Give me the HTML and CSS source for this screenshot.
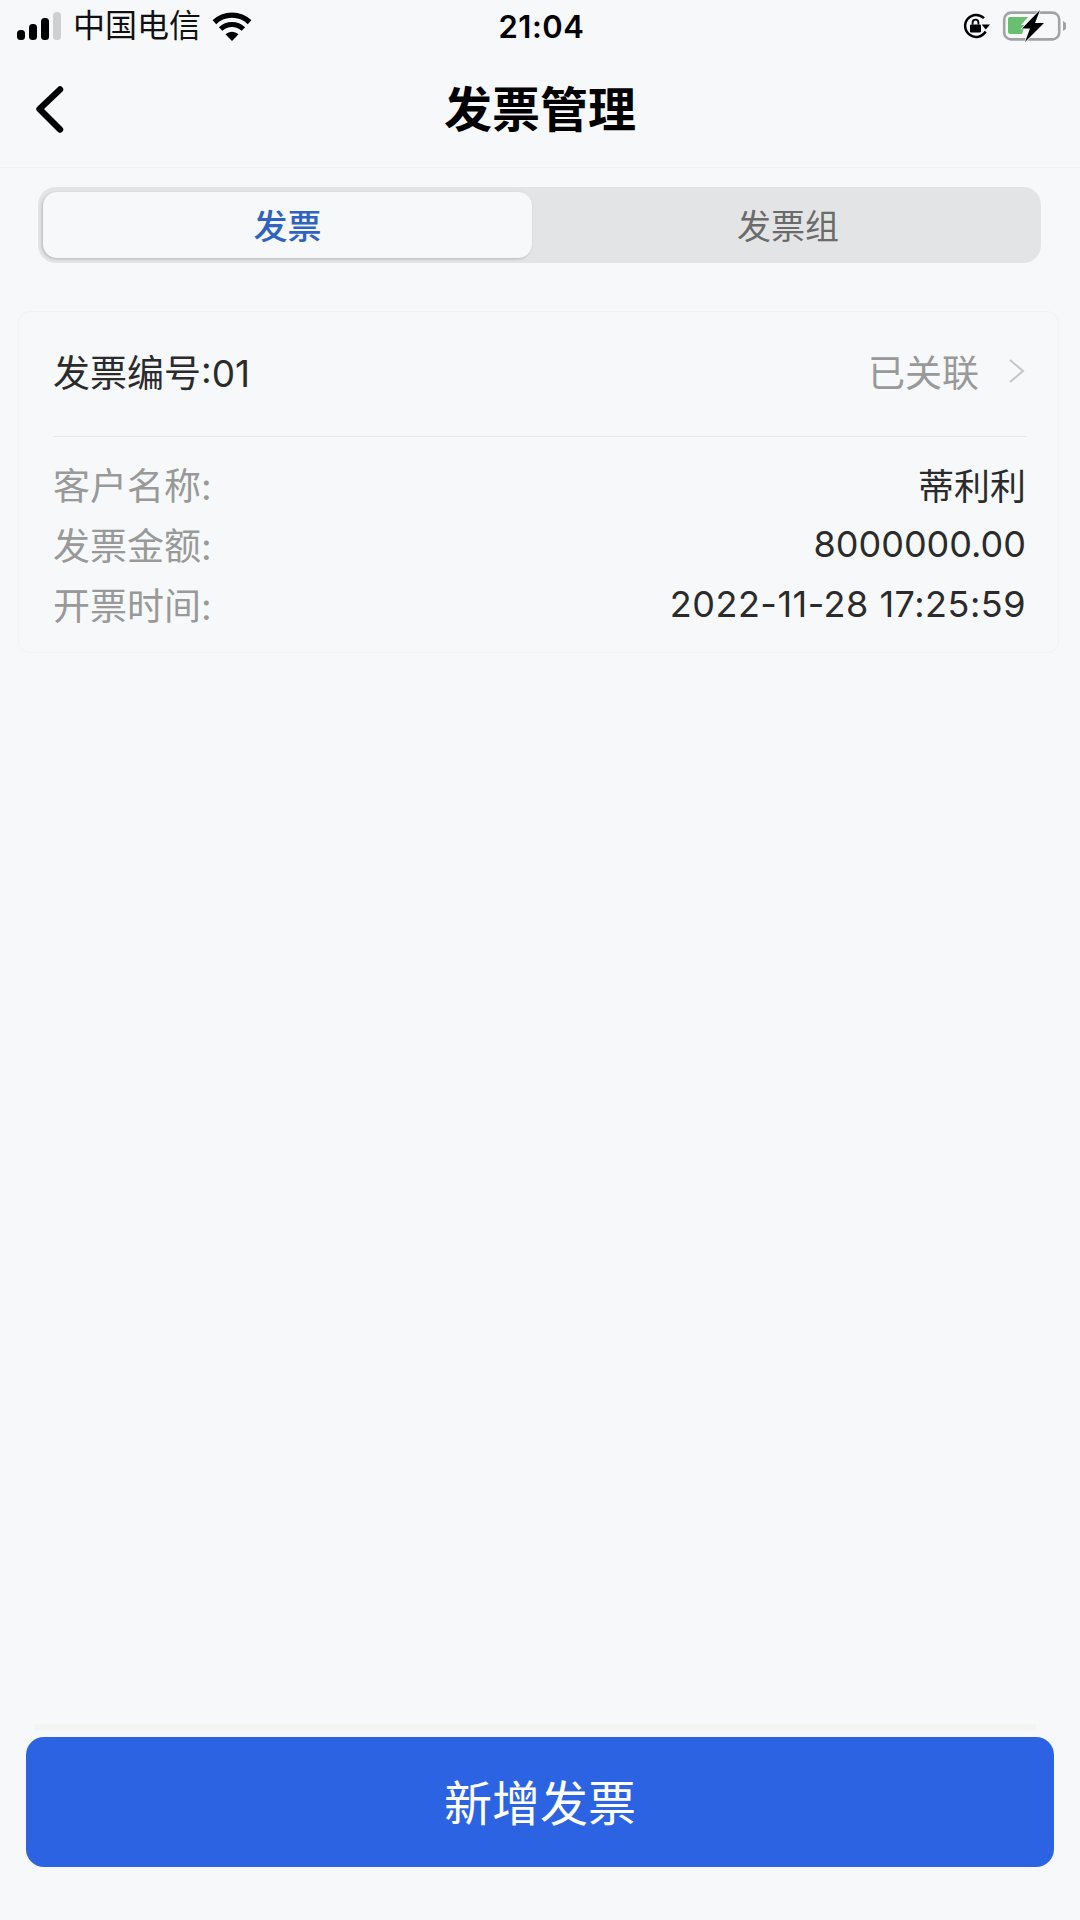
FILE: index.html

```html
<!DOCTYPE html>
<html lang="zh-CN">
<head>
  <meta charset="UTF-8" />
  <title>发票管理</title>
  <meta name="viewport" content="width=device-width, initial-scale=1.0" />
  <link rel="stylesheet" href="styles.css">
</head>
<body>
  <div class="page">
    <div class="status-bar">
      <div class="status-left">
        <svg class="signal" width="44" height="28" viewBox="0 0 44 28">
          <rect x="0" y="18" width="8" height="10" rx="3.5" fill="#000" />
          <rect x="12" y="12" width="8" height="16" rx="3.5" fill="#000" />
          <rect x="24" y="6" width="8" height="22" rx="3.5" fill="#000" />
          <rect x="36" y="0" width="8" height="28" rx="3.5" fill="#cfd0d2" />
        </svg>
        <span class="carrier">中国电信</span>
        <svg class="wifi" width="40" height="30" viewBox="0 0 40 30">
          <path d="M20 30 L13.5 23.2 A9.5 9.5 0 0 1 26.5 23.2 Z" fill="#000" />
          <path d="M8.6 18 A16.5 16.5 0 0 1 31.4 18" fill="none" stroke="#000" stroke-width="5" />
          <path d="M2.4 11.2 A25.5 25.5 0 0 1 37.6 11.2" fill="none" stroke="#000" stroke-width="5.4" />
        </svg>
      </div>
      <div class="time">21:04</div>
      <div class="status-right">
        <svg class="rotate-lock" width="27" height="26" viewBox="0 0 27 26">
          <path d="M21 5.2 A11 11 0 1 0 22.6 18.5" fill="none" stroke="#000" stroke-width="2.5" />
          <path d="M18.6 11.5 H27 L22.8 16.6 Z" fill="#000" />
          <rect x="7" y="11.4" width="11" height="8.2" rx="1.4" fill="#000" />
          <path d="M9.6 11.4 V9.6 A2.9 2.9 0 0 1 15.4 9.6 V11.4" fill="none" stroke="#000" stroke-width="1.8" />
        </svg>
        <svg class="battery" width="64" height="32" viewBox="0 0 64 32">
          <rect x="2.2" y="2.6" width="55" height="26.8" rx="7" fill="none" stroke="#a3a3a3" stroke-width="2.6" />
          <path d="M61 11 L64 13 V19 L61 21 Z" fill="#a3a3a3" />
          <path d="M8 7 H26 L19 15 H23 L20 24 H8 Q6 24 6 22 V9 Q6 7 8 7 Z" fill="#68bf6f" />
          <path class="bolt" d="M38 0 L20 18.5 H28 L23 32 L42 13 H33 Z" />
        </svg>
      </div>
    </div>

    <div class="nav-bar">
      <svg class="back" width="30" height="48" viewBox="0 0 30 48">
        <path d="M26 3.5 L5.5 23 L26 43.5" fill="none" stroke="#000" stroke-width="6.4" stroke-linecap="round" stroke-linejoin="round" />
      </svg>
      <div class="nav-title">发票管理</div>
    </div>

    <div class="tabs">
      <div class="tab active">发票</div>
      <div class="tab">发票组</div>
    </div>

    <div class="card">
      <div class="card-head">
        <span class="invoice-no">发票编号:01</span>
        <span class="link-state">已关联
          <svg class="arrow" width="18" height="26" viewBox="0 0 18 26">
            <path d="M2 2 L15 13 L2 24" fill="none" stroke="#c6c6c6" stroke-width="2" />
          </svg>
        </span>
      </div>
      <div class="card-body">
        <div class="row"><span class="label">客户名称:</span><span class="value">蒂利利</span></div>
        <div class="row"><span class="label">发票金额:</span><span class="value">8000000.00</span></div>
        <div class="row"><span class="label">开票时间:</span><span class="value date">2022-11-28 17:25:59</span></div>
      </div>
    </div>

    <div class="footer">
      <button class="add-btn">新增发票</button>
    </div>
  </div>
</body>
</html>
```

FILE: styles.css

```css
* { box-sizing: border-box; }
body { background: #f6f8fa; margin: 0; font-family: Inter, "Noto Sans CJK SC", sans-serif; color: #2b2b2b; }
.page { height: 1920px; display: flex; flex-direction: column; overflow: hidden; }

.status-bar { height: 52px; padding: 0 14px 0 17px; display: grid; grid-template-columns: 1fr auto 1fr; align-items: center; }
.status-left { display: flex; align-items: center; }
.signal { margin-right: 12px; }
.carrier { font-size: 32px; line-height: 52px; color: #111; }
.wifi { margin-left: 11px; }
.time { font-size: 31px; font-weight: 600; color: #000; letter-spacing: 0.5px; }
.status-right { display: flex; align-items: center; justify-content: flex-end; gap: 12px; }
.bolt { fill: #000; stroke: #f6f8fa; stroke-width: 1.5; paint-order: stroke; }

.nav-bar { height: 116px; padding-left: 34px; display: flex; align-items: center; position: relative; border-bottom: 1px solid #f1f3f5; }
.nav-title { position: absolute; left: 0; right: 0; padding-bottom: 8px; text-align: center; font-size: 48px; font-weight: 700; color: #000; }

.tabs { margin: 19px 39px 0 38px; height: 76px; padding: 5px; background: #e3e4e6; border-radius: 18px; display: flex; }
.tab { flex: 1; padding: 0 0 2px 8px; display: flex; align-items: center; justify-content: center; font-size: 34px; color: #6b6b6b; }
.tab.active { flex: 0 0 489px; padding-left: 0; background: #f6f8fa; border-radius: 14px; color: #2f63c0; font-weight: 500; box-shadow: -1px 1px 3px rgba(0,0,0,0.2); }

.card { margin: 48px 21px 0 18px; height: 342px; padding: 0 32px 0 34px; border: 1px solid #f2f3f3; border-radius: 12px; }
.card-head { height: 125px; padding-bottom: 6px; display: flex; align-items: center; justify-content: space-between; border-bottom: 1px solid #e6e7ea; }
.invoice-no { font-size: 37px; }
.link-state { font-size: 37px; color: #999; display: flex; align-items: center; gap: 29px; }
.card-body { padding-top: 17px; }
.row { height: 60px; display: flex; align-items: center; justify-content: space-between; font-size: 37px; }
.label { color: #999; }
.value { font-size: 36px; }
.date { letter-spacing: 0.5px; }

.footer { margin-top: auto; padding: 0 26px 53px; }
.footer::before { content: ""; display: block; height: 6px; margin: 0 18px 7px 8px; background: #f3f5f2; }
.add-btn { width: 100%; height: 130px; padding-bottom: 6px; background: #2c63e2; border: none; border-radius: 18px; color: #fff; font-family: inherit; font-size: 48px; }
```
